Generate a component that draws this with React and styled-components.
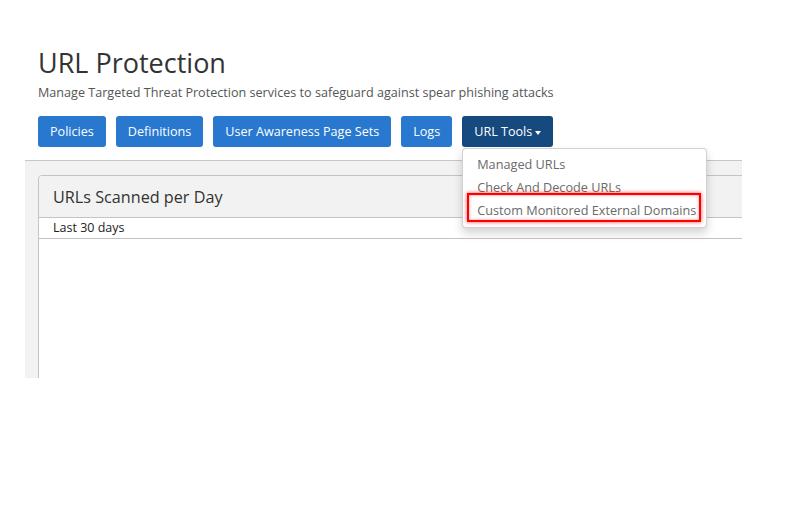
import React from 'react'
import styled, { createGlobalStyle } from 'styled-components'

const GlobalStyle = createGlobalStyle`
  body {
    margin: 0;
    background: #fff;
    font-family: "Open Sans", "Noto Sans", sans-serif;
    color: #333;
  }
`

const tabs = ['Policies', 'Definitions', 'User Awareness Page Sets', 'Logs']
const tools = ['Managed URLs', 'Check And Decode URLs', 'Custom Monitored External Domains']

function App() {
  return (
    <Page>
      <GlobalStyle />
      <Header>
        <Title>URL Protection</Title>
        <Subtitle>Manage Targeted Threat Protection services to safeguard against spear phishing attacks</Subtitle>
        <Toolbar>
          {tabs.map(t => (
            <Button key={t}>{t}</Button>
          ))}
          <DropWrap>
            <Button active>
              URL Tools <Caret />
            </Button>
            <Menu>
              {tools.map((t, i) => (
                <MenuItem key={t} highlighted={i === tools.length - 1}>
                  {t}
                </MenuItem>
              ))}
            </Menu>
          </DropWrap>
        </Toolbar>
      </Header>
      <Content>
        <Card>
          <CardHeader>URLs Scanned per Day</CardHeader>
          <CardSub>Last 30 days</CardSub>
          <CardBody />
        </Card>
      </Content>
    </Page>
  )
}

export default App

const Page = styled.div`
  padding: 47px 0 0 25px;
  width: 717px;
`
const Header = styled.div`
  padding-left: 13px;
`
const Title = styled.h1`
  margin: 0;
  font-size: 27px;
  font-weight: 400;
  line-height: 31px;
  color: #333;
`
const Subtitle = styled.p`
  margin: 6px 0 0;
  font-size: 12.6px;
  line-height: 18px;
  color: #555;
`
const Toolbar = styled.div`
  display: flex;
  gap: 10px;
  margin-top: 14px;
`
const Button = styled.div`
  height: 31px;
  padding: 0 12px;
  display: flex;
  align-items: center;
  gap: 3px;
  border-radius: 3px;
  font-size: 12.6px;
  color: #fff;
  background: ${props => (props.active ? '#164a7e' : '#2878d0')};
  cursor: pointer;
  white-space: nowrap;
`
const Caret = styled.span`
  display: inline-block;
  width: 0;
  height: 0;
  border-left: 3.5px solid transparent;
  border-right: 3.5px solid transparent;
  border-top: 4px solid #fff;
  margin-top: 2px;
`
const DropWrap = styled.div`
  position: relative;
`
const Menu = styled.div`
  position: absolute;
  top: 32px;
  left: 0;
  width: 243px;
  padding: 4px 0 5px;
  background: #fff;
  border: 1px solid rgba(0, 0, 0, 0.18);
  border-radius: 4px;
  box-shadow: 0 5px 10px rgba(0, 0, 0, 0.18);
  z-index: 10;
`
const MenuItem = styled.div`
  position: relative;
  padding: 0 14px;
  line-height: 23px;
  font-size: 12.7px;
  color: #6a6a6a;
  white-space: nowrap;
  &::after {
    content: '';
    display: ${props => (props.highlighted ? 'block' : 'none')};
    position: absolute;
    left: 4px;
    right: 5px;
    top: -6px;
    bottom: 0;
    border: 2px solid #f00;
    box-shadow: 0 0 4px rgba(255, 0, 0, 0.7), inset 0 0 3px rgba(255, 0, 0, 0.5);
  }
`
const Content = styled.div`
  margin-top: 13px;
  height: 203px;
  overflow: hidden;
  background: #f2f2f2;
  border-top: 1px solid #c8c8c8;
  padding: 14px 0 0 13px;
`
const Card = styled.div`
  width: 760px;
  height: 300px;
  background: #fff;
  border: 1px solid #c4c4c4;
  border-radius: 4px 0 0 0;
`
const CardHeader = styled.div`
  height: 41px;
  display: flex;
  align-items: center;
  padding: 0 14px;
  background: #f2f2f2;
  border-bottom: 1px solid #c4c4c4;
  border-radius: 4px 0 0 0;
  font-size: 16.2px;
  color: #333;
`
const CardSub = styled.div`
  height: 20px;
  line-height: 20px;
  padding: 0 14px;
  font-size: 12.5px;
  color: #222;
  border-bottom: 1px solid #c4c4c4;
`
const CardBody = styled.div``
